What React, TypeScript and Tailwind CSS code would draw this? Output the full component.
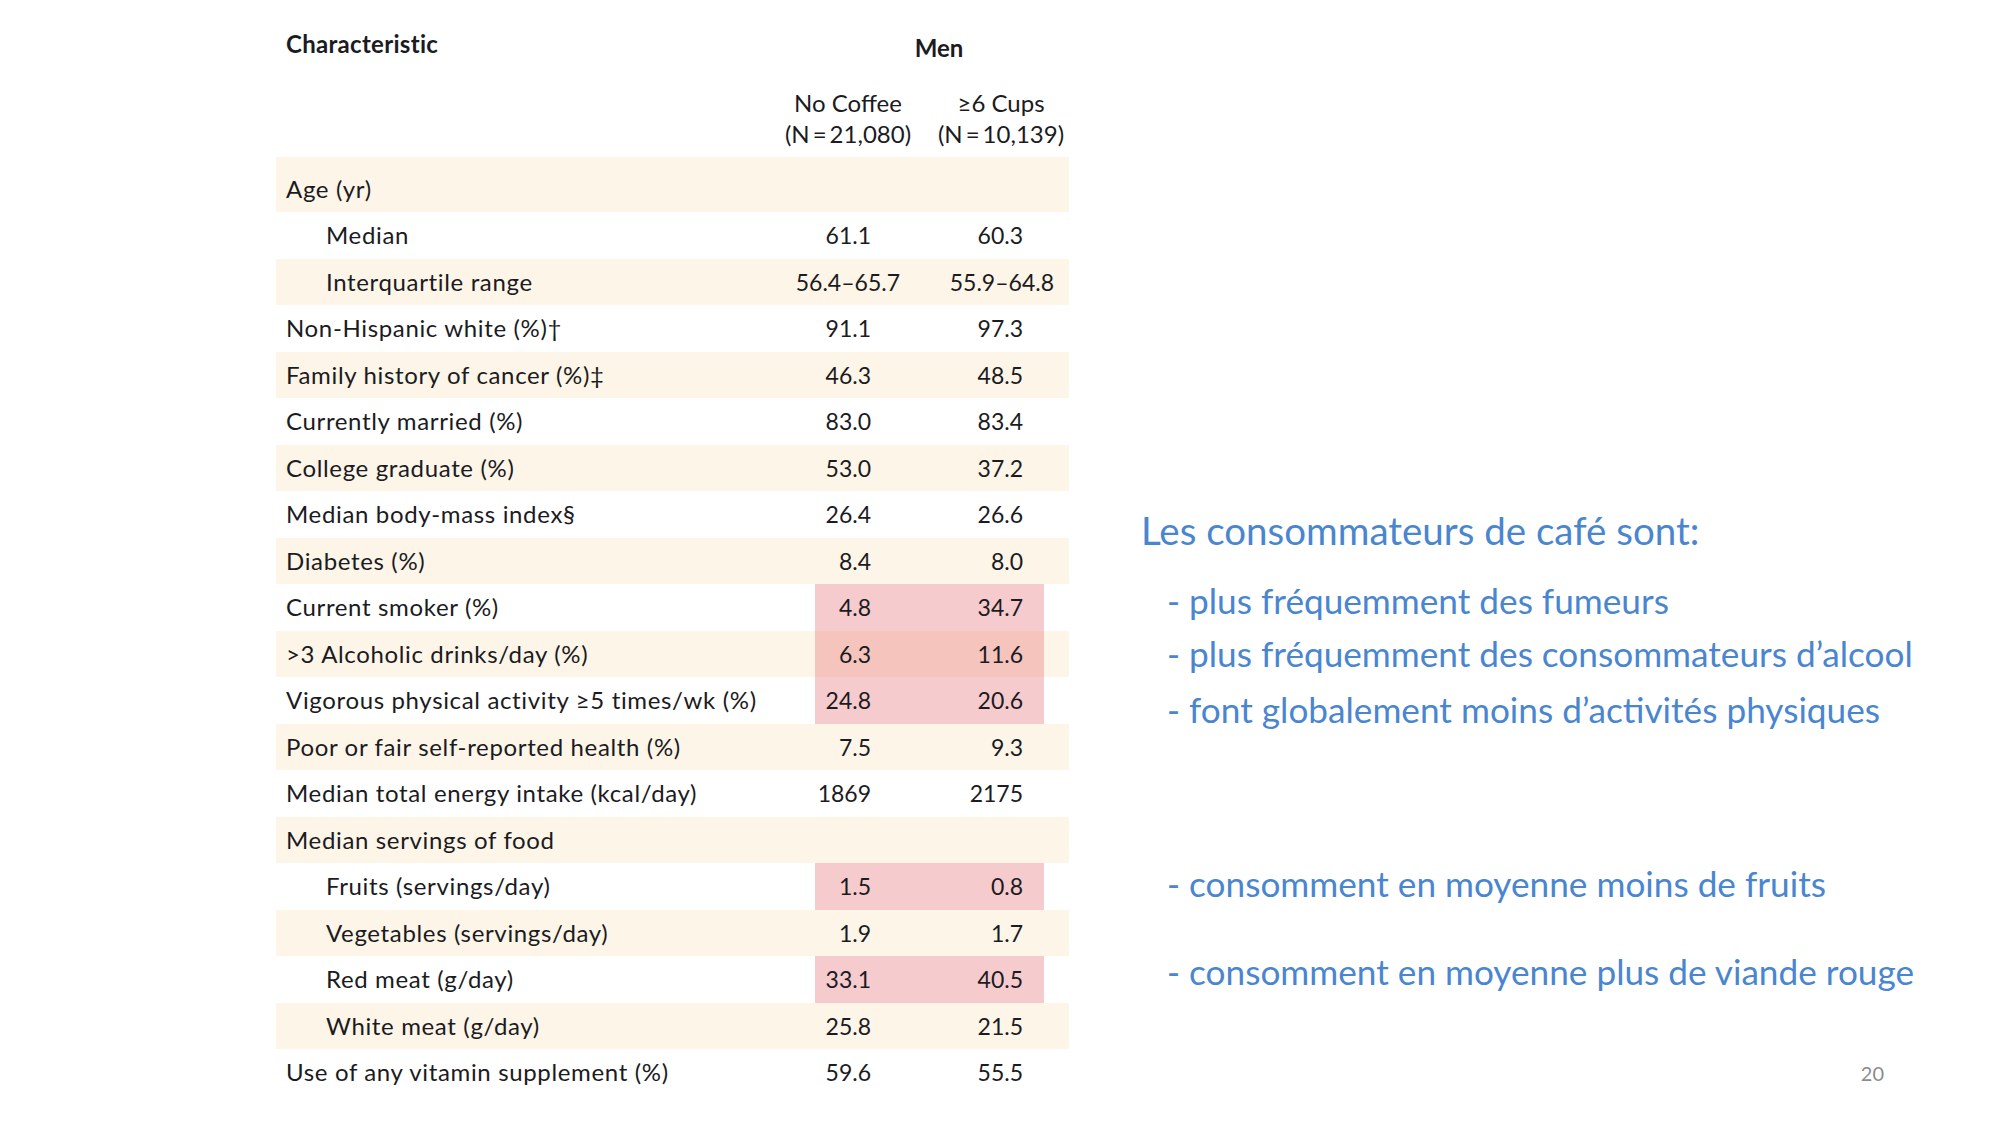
const rows = [
  { label: "Age (yr)", group: true },
  { label: "Median", indent: true, a: "61.1", b: "60.3" },
  { label: "Interquartile range", indent: true, a: "56.4–65.7", b: "55.9–64.8", range: true },
  { label: "Non-Hispanic white (%)†", a: "91.1", b: "97.3" },
  { label: "Family history of cancer (%)‡", a: "46.3", b: "48.5" },
  { label: "Currently married (%)", a: "83.0", b: "83.4" },
  { label: "College graduate (%)", a: "53.0", b: "37.2" },
  { label: "Median body-mass index§", a: "26.4", b: "26.6" },
  { label: "Diabetes (%)", a: "8.4", b: "8.0" },
  { label: "Current smoker (%)", a: "4.8", b: "34.7", hot: true },
  { label: ">3 Alcoholic drinks/day (%)", a: "6.3", b: "11.6", hot: true },
  { label: "Vigorous physical activity ≥5 times/wk (%)", a: "24.8", b: "20.6", hot: true },
  { label: "Poor or fair self-reported health (%)", a: "7.5", b: "9.3" },
  { label: "Median total energy intake (kcal/day)", a: "1869", b: "2175" },
  { label: "Median servings of food", group: true },
  { label: "Fruits (servings/day)", indent: true, a: "1.5", b: "0.8", hot: true },
  { label: "Vegetables (servings/day)", indent: true, a: "1.9", b: "1.7" },
  { label: "Red meat (g/day)", indent: true, a: "33.1", b: "40.5", hot: true },
  { label: "White meat (g/day)", indent: true, a: "25.8", b: "21.5" },
  { label: "Use of any vitamin supplement (%)", a: "59.6", b: "55.5" },
];

type Row = {
  label: string;
  indent?: boolean;
  range?: boolean;
  hot?: boolean;
  group?: boolean;
  a?: string;
  b?: string;
};

function TableRow({ row, index }: { row: Row; index: number }) {
  const striped = index % 2 === 0;
  const first = index === 0;
  return (
    <div
      className={`grid grid-cols-[539px_114px_115px_25px] ${first ? "h-[55px] pt-[8px]" : "h-[46.5px]"} ${
        striped ? "bg-[#fdf5e8]" : "bg-white"
      }`}
    >
      <div
        className={`flex items-center whitespace-nowrap text-[24px] tracking-[0.65px] ${
          row.indent ? "pl-[50px]" : "pl-[10px]"
        }`}
      >
        {row.label}
      </div>
      <div
        className={`flex items-center justify-end whitespace-nowrap ${row.range ? "pr-[29px]" : "pr-[58px]"} ${
          row.hot ? "bg-[rgba(222,70,80,0.28)]" : ""
        }`}
      >
        {row.a}
      </div>
      <div
        className={`flex items-center justify-end whitespace-nowrap ${row.range ? "-mr-[10px] pr-0" : "pr-[21px]"} ${
          row.hot ? "bg-[rgba(222,70,80,0.28)]" : ""
        }`}
      >
        {row.b}
      </div>
      <div />
    </div>
  );
}

const notes = [
  { text: "- plus fréquemment des fumeurs", gap: "mt-[26px]" },
  { text: "- plus fréquemment des consommateurs d’alcool", gap: "mt-[9px]" },
  { text: "- font globalement moins d’activités physiques", gap: "mt-[12px]" },
  { text: "- consomment en moyenne moins de fruits", gap: "mt-[130px]" },
  { text: "- consomment en moyenne plus de viande rouge", gap: "mt-[44px]" },
];

export default function App() {
  return (
    <div className="w-[2000px] h-[1125px] bg-white flex overflow-hidden">
      {/* left: NEJM table */}
      <div className="ml-[276px] w-[793px] shrink-0 flex flex-col text-[23px] text-[#1b1b22] font-['Lato',sans-serif]">
        <div className="h-[157px] flex flex-col">
          <div className="h-[72px] pt-[30px] grid grid-cols-[496px_306px] items-start text-[24px] font-bold leading-[28px]">
            <div className="pl-[10px] tracking-[0.3px]">Characteristic</div>
            <div className="mt-[4px] pl-[28px] text-center">Men</div>
          </div>
          <div className="mt-[15px] grid grid-cols-[496px_152px_154px] text-[24px] leading-[31px] whitespace-nowrap">
            <div />
            <div className="text-center">
              <div>No Coffee</div>
              <div>(N{"\u2009"}={"\u2009"}21,080)</div>
            </div>
            <div className="text-center">
              <div>≥6 Cups</div>
              <div>(N{"\u2009"}={"\u2009"}10,139)</div>
            </div>
          </div>
        </div>
        {rows.map((row, i) => (
          <TableRow key={i} row={row} index={i} />
        ))}
      </div>

      {/* right: commentary */}
      <div className="ml-[72px] min-w-0 flex-1 flex flex-col pt-[508px] pr-[116px] text-[#4a86cf] font-['Lato',sans-serif] leading-[44px]">
        <div className="whitespace-nowrap text-[38.5px]">Les consommateurs de café sont:</div>
        <div className="pl-[26px] flex flex-col text-[35.2px]">
          {notes.map((n) => (
            <div key={n.text} className={`${n.gap} whitespace-nowrap`}>
              {n.text}
            </div>
          ))}
        </div>
        <div className="mt-auto mb-[40px] self-end text-[20px] leading-[24px] text-[#8c8c8c]">20</div>
      </div>
    </div>
  );
}
